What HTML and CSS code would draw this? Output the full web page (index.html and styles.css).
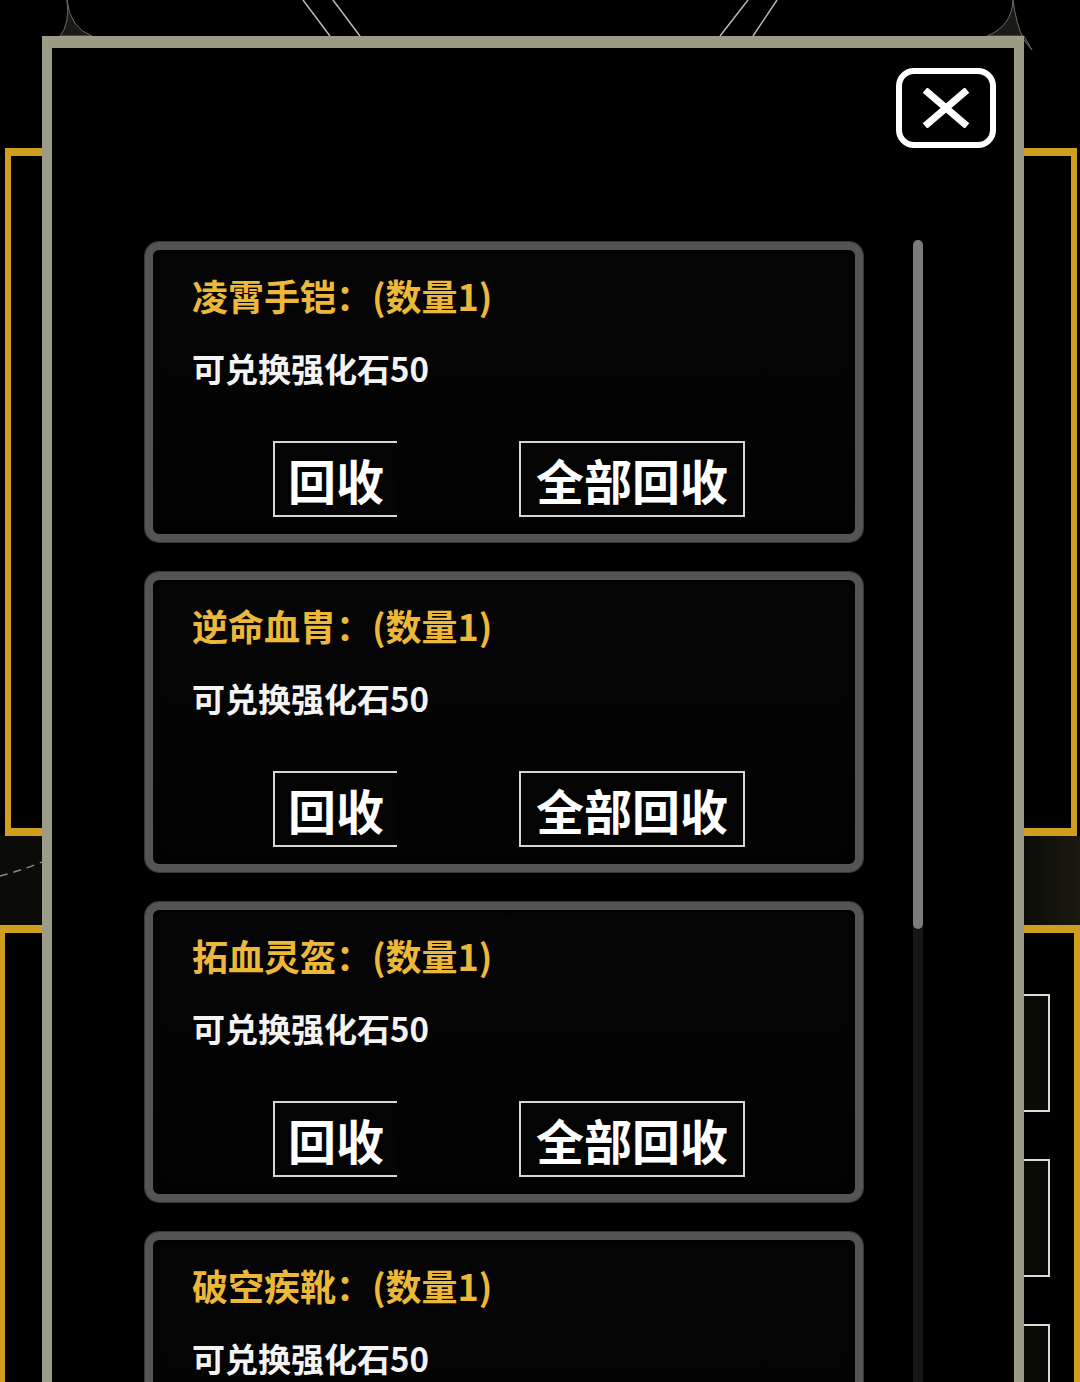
FILE: index.html
```html
<!DOCTYPE html>
<html lang="zh-CN">
<head>
<meta charset="utf-8">
<title>回收</title>
<link rel="stylesheet" href="styles.css">
</head>
<body>
<svg class="bg" width="1080" height="1382" viewBox="0 0 1080 1382" aria-hidden="true">
  <defs>
    <linearGradient id="glowR" x1="0" x2="1" y1="0" y2="0">
      <stop offset="0" stop-color="#0b0b09"/>
      <stop offset="1" stop-color="#1c1a0e"/>
    </linearGradient>
  </defs>
  <!-- top decoration lines -->
  <g stroke="#b9b9b0" stroke-width="1.5" fill="none">
    <line x1="303" y1="0" x2="330" y2="36"/>
    <line x1="333" y1="0" x2="360" y2="36"/>
    <line x1="748" y1="0" x2="720" y2="36"/>
    <line x1="777" y1="0" x2="753" y2="36"/>
  </g>
  <g stroke="#6c6c64" stroke-width="1" fill="#1a1a16">
    <path d="M67 0 Q70 24 60 36 L92 36 Q70 28 67 0 Z"/>
    <path d="M1013 0 Q1012 26 987 36 L1024 36 L1032 50 L1024 40 Q1016 24 1013 0 Z"/>
  </g>
  <!-- left frames -->
  <g fill="#cf9e1e">
    <rect x="5" y="148" width="6" height="688"/>
    <rect x="5" y="148" width="37" height="8"/>
    <rect x="5" y="828" width="37" height="8"/>
    <rect x="0" y="925" width="42" height="8"/>
    <rect x="0" y="925" width="5" height="457"/>
  </g>
  <rect x="0" y="836" width="42" height="89" fill="#0b0b09"/>
  <path d="M0 876 Q20 871 42 862" stroke="#8a8a82" stroke-width="1.5" stroke-dasharray="8 6" fill="none"/>
  <!-- right frames -->
  <rect x="1024" y="836" width="56" height="89" fill="url(#glowR)"/>
  <g fill="#cf9e1e">
    <rect x="1024" y="148" width="53" height="8"/>
    <rect x="1071" y="148" width="6" height="688"/>
    <rect x="1024" y="828" width="53" height="8"/>
    <rect x="1024" y="925" width="56" height="8"/>
    <rect x="1074" y="925" width="6" height="457"/>
  </g>
  <g stroke="#dcdcd4" stroke-width="2" fill="#0a0a07">
    <rect x="1020" y="995" width="29" height="116"/>
    <rect x="1020" y="1160" width="29" height="116"/>
    <rect x="1020" y="1325" width="29" height="116"/>
  </g>
</svg>

<div class="modal">
  <div class="modal-head">
    <div class="close">
      <svg width="48" height="40" viewBox="0 0 48 40" aria-hidden="true">
        <path d="M3 2 L45 38 M45 2 L3 38" stroke="#fff" stroke-width="7" fill="none"/>
      </svg>
    </div>
  </div>
  <div class="modal-body">
    <div class="list">
      <div class="card">
        <div class="title">凌霄手铠：(数量1)</div>
        <div class="desc">可兑换强化石50</div>
        <div class="actions">
          <div class="btn small">回收</div>
          <div class="btn wide">全部回收</div>
        </div>
      </div>
      <div class="card">
        <div class="title">逆命血胄：(数量1)</div>
        <div class="desc">可兑换强化石50</div>
        <div class="actions">
          <div class="btn small">回收</div>
          <div class="btn wide">全部回收</div>
        </div>
      </div>
      <div class="card">
        <div class="title">拓血灵盔：(数量1)</div>
        <div class="desc">可兑换强化石50</div>
        <div class="actions">
          <div class="btn small">回收</div>
          <div class="btn wide">全部回收</div>
        </div>
      </div>
      <div class="card">
        <div class="title">破空疾靴：(数量1)</div>
        <div class="desc">可兑换强化石50</div>
      </div>
    </div>
    <div class="scroll"><div class="thumb"></div></div>
  </div>
</div>
</body>
</html>
```
FILE: styles.css
```css
html, body {
  margin: 0;
  padding: 0;
  background: #000;
  height: 1382px;
  overflow: hidden;
}

body {
  position: relative;
  width: 1080px;
  font-family: "Noto Sans CJK SC", "Noto Sans", sans-serif;
}

.bg {
  position: absolute;
  left: 0;
  top: 0;
}

.modal {
  position: absolute;
  left: 42px;
  top: 36px;
  width: 982px;
  height: 1420px;
  box-sizing: border-box;
  border: 10px solid #9b9b86;
  border-top-width: 12px;
  background: #000;
  display: flex;
  flex-direction: column;
}

.modal-head {
  display: flex;
  justify-content: flex-end;
  padding: 20px 18px 0 0;
}

.close {
  width: 100px;
  height: 80px;
  box-sizing: border-box;
  border: 6px solid #fff;
  border-radius: 18px;
  display: flex;
  align-items: center;
  justify-content: center;
}

.modal-body {
  display: flex;
  padding-left: 93px;
  margin-top: 94px;
}

.list {
  width: 718px;
  display: flex;
  flex-direction: column;
  gap: 30px;
}

.card {
  flex-shrink: 0;
  height: 300px;
  box-sizing: border-box;
  border: 8px solid #525456;
  border-radius: 14px;
  background: linear-gradient(180deg, #050505 0%, #020202 100%);
  box-shadow: inset 0 0 5px 2px rgba(0, 0, 0, 0.9), 0 0 0 1px rgba(110, 110, 110, 0.5);
  padding: 27px 0 0 39px;
}

.title {
  font-size: 36px;
  line-height: 36px;
  font-weight: 700;
  color: #ecb83a;
  white-space: nowrap;
}

.desc {
  margin-top: 39px;
  font-size: 33px;
  line-height: 33px;
  font-weight: 700;
  color: #f3f3f3;
  white-space: nowrap;
}

.actions {
  display: flex;
  gap: 122px;
  margin-top: 56px;
  margin-left: 81px;
}

.btn {
  height: 76px;
  box-sizing: border-box;
  border: 2px solid #d8d8d2;
  background: #040404;
  display: flex;
  align-items: center;
  justify-content: center;
  font-size: 48px;
  line-height: 48px;
  font-weight: 700;
  color: #fff;
  white-space: nowrap;
}

.btn.small {
  width: 124px;
  border-right: 0;
}

.btn.wide {
  width: 226px;
}

.scroll {
  width: 10px;
  margin-left: 50px;
  margin-top: -2px;
  background: #161616;
  border-radius: 5px;
}

.thumb {
  height: 689px;
  background: #7b7b7b;
  border-radius: 5px;
}
```
